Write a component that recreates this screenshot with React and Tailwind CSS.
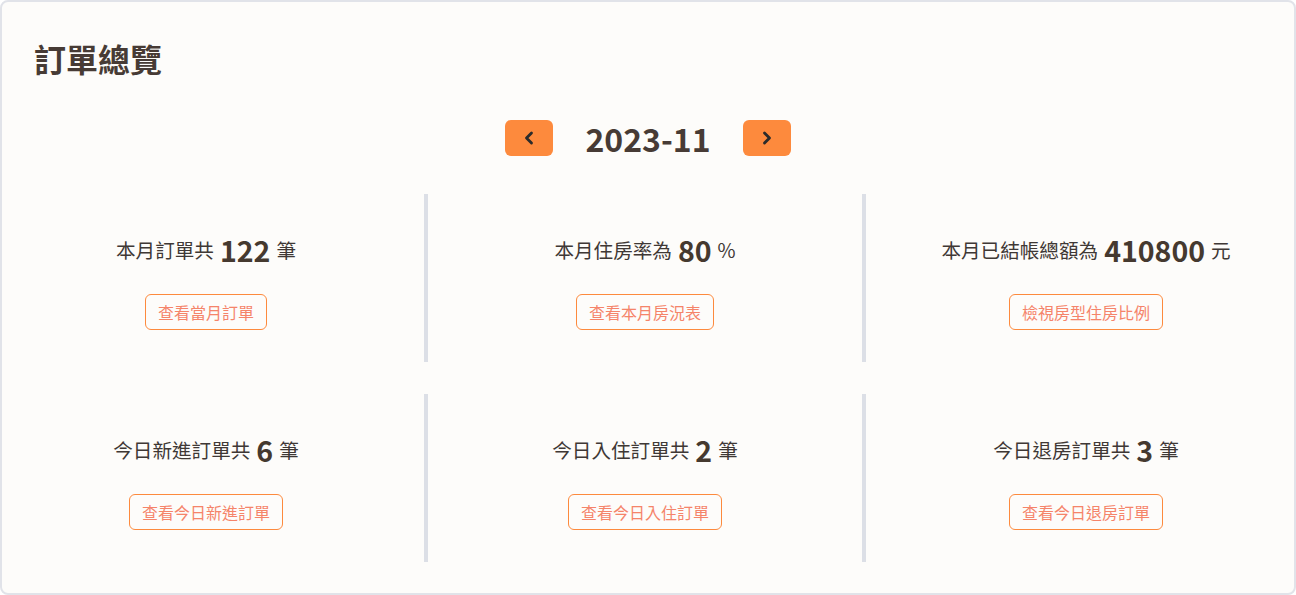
import { ChevronLeft, ChevronRight } from 'lucide-react'

const monthStats = [
  { label: '本月訂單共', value: '122', unit: '筆', action: '查看當月訂單' },
  { label: '本月住房率為', value: '80', unit: '%', action: '查看本月房況表' },
  { label: '本月已結帳總額為', value: '410800', unit: '元', action: '檢視房型住房比例' },
]

const todayStats = [
  { label: '今日新進訂單共', value: '6', unit: '筆', action: '查看今日新進訂單' },
  { label: '今日入住訂單共', value: '2', unit: '筆', action: '查看今日入住訂單' },
  { label: '今日退房訂單共', value: '3', unit: '筆', action: '查看今日退房訂單' },
]

// column paddings nudge the centres to where the screenshot has them
const cellPad = ['pl-[2px]', '', 'pl-[6px]']

function StatCell({ item, index }) {
  return (
    <div className={`h-[168px] flex flex-col items-center pt-[38px] ${cellPad[index]} ${index === 0 ? '' : 'border-l-4 border-[#dcdfe6]'}`}>
      <div className="h-[36px] flex items-center gap-[6px] text-[19.6px] text-[#3f3835]">
        <span>{item.label}</span>
        <span className="text-[28.5px] font-bold text-[#45392f]">{item.value}</span>
        <span>{item.unit}</span>
      </div>
      <button className="mt-[26px] h-[36px] px-[12px] rounded-[6px] border border-[#fd8a3d] text-[16px] text-[#f5846a] bg-transparent">
        {item.action}
      </button>
    </div>
  )
}

function StatRow({ items }) {
  return (
    <div className="grid grid-cols-3 w-[1314px] -ml-[48px]">
      {items.map((item, i) => (
        <StatCell key={i} item={item} index={i} />
      ))}
    </div>
  )
}

export default function App() {
  return (
    <div className="w-[1296px] h-[595px] bg-white font-['Noto_Sans_CJK_TC','Noto_Sans',sans-serif]">
      <div className="h-full rounded-lg border-2 border-[#e1e3e9] bg-[#fdfcfa] p-[32px] overflow-hidden">
        <h1 className="text-[32px] leading-[48px] font-bold text-[#473b35]">訂單總覽</h1>

        <div className="mt-[38px] flex items-center justify-center gap-[32px]">
          <button className="w-[48px] h-[36px] rounded-md bg-[#fd8a3d] flex items-center justify-center text-[#2b2b2b]">
            <ChevronLeft size={20} strokeWidth={3.4} />
          </button>
          <div className="text-[32px] leading-[36px] font-bold text-[#473b35]">2023-11</div>
          <button className="w-[48px] h-[36px] rounded-md bg-[#fd8a3d] flex items-center justify-center text-[#2b2b2b]">
            <ChevronRight size={20} strokeWidth={3.4} />
          </button>
        </div>

        <div className="mt-[38px] flex flex-col gap-[32px]">
          <StatRow items={monthStats} />
          <StatRow items={todayStats} />
        </div>
      </div>
    </div>
  )
}
